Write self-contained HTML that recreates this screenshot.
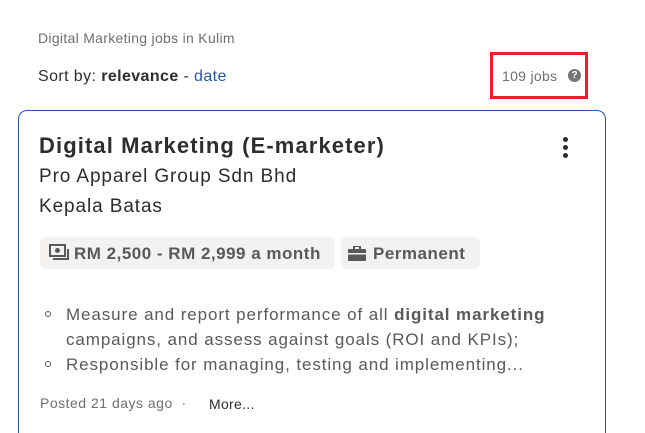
<!DOCTYPE html>
<html><head><meta charset="utf-8"><style>
*{margin:0;padding:0;box-sizing:border-box}
html,body{width:645px;height:433px;overflow:hidden}
body{background:#fff;font-family:"Liberation Sans",sans-serif;position:relative;color:#2d2d2d}
.a{position:absolute;white-space:nowrap}
</style></head><body>
<div class="a" style="left:38px;top:30px;font-size:14px;color:#6f6f6f;letter-spacing:0.3px">Digital Marketing jobs in Kulim</div>
<div class="a" style="left:38px;top:68px;font-size:16px;color:#2d2d2d;letter-spacing:0.4px">Sort by: <b>relevance</b> - <span style="color:#2557a7">date</span></div>
<div class="a" style="left:490px;top:52px;width:98px;height:47px;border:3px solid #e8202a"></div>
<div class="a" style="left:502px;top:68px;font-size:14px;color:#6f6f6f;letter-spacing:0.3px">109 jobs</div>
<div class="a" style="left:568px;top:69px;width:13px;height:13px;border-radius:50%;background:#767676;color:#fff;font-size:10px;font-weight:bold;text-align:center;line-height:13px">?</div>
<div class="a" style="left:18px;top:110px;width:588px;height:340px;border:1px solid #2557a7;border-radius:9px"></div>
<div class="a" style="left:39px;top:133px;font-size:22px;font-weight:bold;color:#2d2d2d;letter-spacing:1.1px">Digital Marketing (E-marketer)</div>
<div class="a" style="left:563px;top:137px;width:5px;height:5px;border-radius:50%;background:#2d2d2d;box-shadow:0 8px 0 #2d2d2d,0 16px 0 #2d2d2d"></div>
<div class="a" style="left:39px;top:166px;font-size:19px;letter-spacing:0.9px">Pro Apparel Group Sdn Bhd</div>
<div class="a" style="left:39px;top:196px;font-size:19px;letter-spacing:0.9px">Kepala Batas</div>
<div class="a" style="left:40px;top:237px;width:295px;height:32px;background:#f3f2f1;border-radius:5px"></div>
<div class="a" style="left:341px;top:237px;width:139px;height:32px;background:#f3f2f1;border-radius:5px"></div>
<svg class="a" style="left:49px;top:244px" width="20" height="18" viewBox="0 0 20 18"><rect x="1" y="1" width="15" height="11" fill="none" stroke="#595959" stroke-width="2"/><circle cx="8.5" cy="6.5" r="2.5" fill="#595959"/><path d="M4 15h15V5" fill="none" stroke="#595959" stroke-width="2"/></svg>
<div class="a" style="left:74px;top:244px;font-size:17px;font-weight:bold;color:#595959;letter-spacing:0.5px">RM 2,500 - RM 2,999 a month</div>
<svg class="a" style="left:348px;top:246px" width="18" height="15" viewBox="0 0 18 15"><rect x="6" y="0" width="6" height="4" fill="none" stroke="#595959" stroke-width="2"/><rect x="0" y="3" width="18" height="12" rx="1" fill="#595959"/><rect x="0" y="7" width="18" height="1.5" fill="#f3f2f1"/></svg>
<div class="a" style="left:373px;top:244px;font-size:17px;font-weight:bold;color:#595959;letter-spacing:0.5px">Permanent</div>
<div class="a" style="left:45px;top:311px;width:6px;height:6px;border:1px solid #595959;border-radius:50%"></div>
<div class="a" style="left:45px;top:361px;width:6px;height:6px;border:1px solid #595959;border-radius:50%"></div>
<div class="a" style="left:66px;top:302px;font-size:17px;color:#595959;line-height:25px;letter-spacing:0.9px">Measure and report performance of all <b>digital marketing</b><br>campaigns, and assess against goals (ROI and KPIs);<br>Responsible for managing, testing and implementing...</div>
<div class="a" style="left:40px;top:395px;font-size:14px;color:#6f6f6f;letter-spacing:0.5px">Posted 21 days ago &nbsp;·</div>
<div class="a" style="left:209px;top:396px;font-size:14px;color:#2d2d2d;letter-spacing:0.3px">More...</div>
</body></html>
